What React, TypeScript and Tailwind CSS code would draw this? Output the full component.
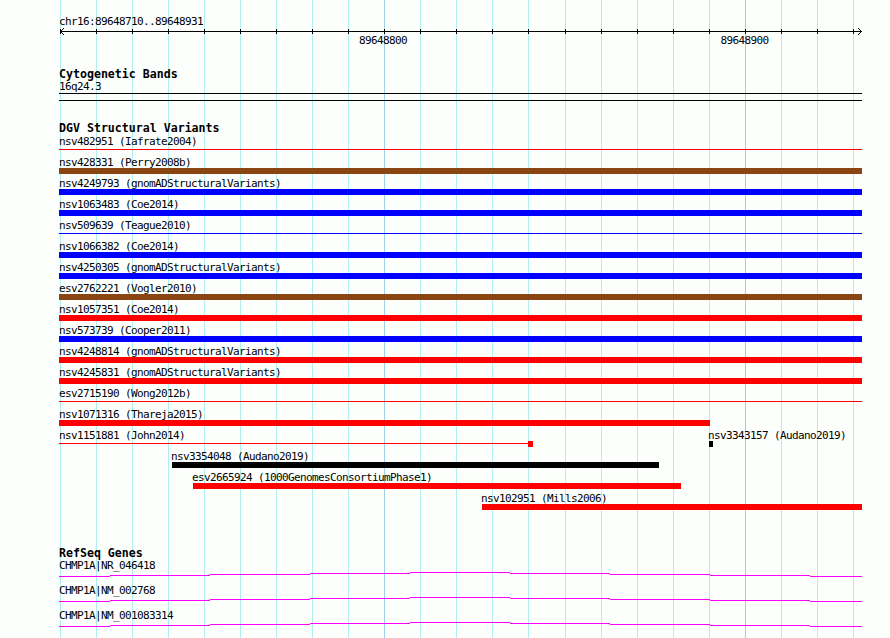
import React from "react";

type Row = {
  label: string;
  kind: "thick" | "thin";
  color: string;
};

const RED = "bg-[#ff0000]";
const BLUE = "bg-[#0000ff]";
const BROWN = "bg-[#8b4513]";

const fullRows: Row[] = [
  { label: "nsv482951 (Iafrate2004)", kind: "thin", color: RED },
  { label: "nsv428331 (Perry2008b)", kind: "thick", color: BROWN },
  { label: "nsv4249793 (gnomADStructuralVariants)", kind: "thick", color: BLUE },
  { label: "nsv1063483 (Coe2014)", kind: "thick", color: BLUE },
  { label: "nsv509639 (Teague2010)", kind: "thin", color: BLUE },
  { label: "nsv1066382 (Coe2014)", kind: "thick", color: BLUE },
  { label: "nsv4250305 (gnomADStructuralVariants)", kind: "thick", color: BLUE },
  { label: "esv2762221 (Vogler2010)", kind: "thick", color: BROWN },
  { label: "nsv1057351 (Coe2014)", kind: "thick", color: RED },
  { label: "nsv573739 (Cooper2011)", kind: "thick", color: BLUE },
  { label: "nsv4248814 (gnomADStructuralVariants)", kind: "thick", color: RED },
  { label: "nsv4245831 (gnomADStructuralVariants)", kind: "thick", color: RED },
  { label: "esv2715190 (Wong2012b)", kind: "thin", color: RED },
];

const GRID = [60, 96, 132, 168, 204, 240, 276, 312, 348, 384, 420, 456, 492, 528, 565, 601, 637, 673, 709, 745, 781, 817, 853];
const MAJOR = [384, 745];

const GENE_STEPS: [number, number, number][] = [
  [59, 110, 5],
  [110, 210, 4],
  [210, 310, 3],
  [310, 410, 2],
  [410, 510, 1],
  [510, 610, 2],
  [610, 710, 3],
  [710, 810, 4],
  [810, 862, 5],
];

function Label({ children, className = "" }: { children: React.ReactNode; className?: string }) {
  return <div className={`h-[11px] leading-[11px] whitespace-pre ${className}`}>{children}</div>;
}

function Heading({ children }: { children: React.ReactNode }) {
  return (
    <div className="h-[12px] leading-[12px] text-[11.6px] tracking-normal font-bold whitespace-pre">{children}</div>
  );
}

function FullRow({ row }: { row: Row }) {
  return (
    <div className="h-[21px]">
      <Label>{row.label}</Label>
      {row.kind === "thick" ? (
        <div className={`h-[6px] w-[803px] ${row.color}`} />
      ) : (
        <div className="h-[6px] w-[803px] pt-[2px]">
          <div className={`h-px w-full ${row.color}`} />
        </div>
      )}
    </div>
  );
}

function Axis() {
  const px: [number, number][] = [
    [61, 30], [62, 29], [63, 28], [61, 32], [62, 33], [63, 34],
    [860, 30], [859, 29], [858, 28], [860, 32], [859, 33], [858, 34],
  ];
  return (
    <svg width={803} height={20} className="block" shapeRendering="crispEdges">
      <rect x={1} y={4} width={802} height={1} fill="#000" />
      {GRID.map((g) => (
        <rect key={g} x={g - 59} y={2} width={1} height={5} fill="#000" />
      ))}
      {px.map(([x, y], i) => (
        <rect key={i} x={x - 59} y={y - 27} width={1} height={1} fill="#000" />
      ))}
      <text
        x={300}
        y={17}
        fontFamily="'DejaVu Sans Mono', monospace"
        fontSize={11}
        letterSpacing={-0.62}
        fill="#000"
      >
        89648800
      </text>
      <text
        x={661.5}
        y={17}
        fontFamily="'DejaVu Sans Mono', monospace"
        fontSize={11}
        letterSpacing={-0.62}
        fill="#000"
      >
        89648900
      </text>
    </svg>
  );
}

function GeneLine() {
  return (
    <svg width={803} height={6} className="block" shapeRendering="crispEdges">
      {GENE_STEPS.map(([a, b, y]) => (
        <rect key={a} x={a - 59} y={y} width={b - a} height={1} fill="#ff00ff" />
      ))}
    </svg>
  );
}

export default function App() {
  return (
    <div className="relative w-[890px] h-[638px] overflow-hidden bg-[#fdfffd] text-black text-[11px] tracking-[-0.62px] font-['DejaVu_Sans_Mono',monospace]">
      <svg className="absolute left-0 top-0" width={890} height={638} shapeRendering="crispEdges">
        {GRID.map((g) => (
          <rect
            key={g}
            x={g}
            y={0}
            width={1}
            height={638}
            fill={MAJOR.includes(g) ? "#9fd0e8" : "#b0eef0"}
          />
        ))}
      </svg>

      <div className="relative pl-[59px] pt-[16px]">
        <Label>chr16:89648710..89648931</Label>
        <Axis />

        <div className="mt-[21px]">
          <Heading>Cytogenetic Bands</Heading>
        </div>
        <div className="mt-px">
          <Label>16q24.3</Label>
        </div>
        <div className="mt-px h-[8px] w-[803px] border-y border-black" />

        <div className="mt-[21px]">
          <Heading>DGV Structural Variants</Heading>
        </div>

        <div className="mt-[2px] flex flex-col">
          {fullRows.map((r) => (
            <FullRow key={r.label} row={r} />
          ))}

          <div className="h-[21px]">
            <Label>nsv1071316 (Thareja2015)</Label>
            <div className={`h-[6px] w-[651px] ${RED}`} />
          </div>

          <div className="h-[21px]">
            <div className="flex h-[11px] leading-[11px] whitespace-pre">
              <span className="w-[649px]">nsv1151881 (John2014)</span>
              <span>nsv3343157 (Audano2019)</span>
            </div>
            <div className="flex h-[6px] items-start">
              <div className="w-[469px] pt-[2px]">
                <div className={`h-px w-full ${RED}`} />
              </div>
              <div className={`h-[6px] w-[5px] ${RED}`} />
              <div className="w-[176px]" />
              <div className="h-[6px] w-[4px] bg-black" />
            </div>
          </div>

          <div className="h-[21px]">
            <Label className="pl-[112px]">nsv3354048 (Audano2019)</Label>
            <div className="ml-[113px] h-[6px] w-[487px] bg-black" />
          </div>

          <div className="h-[21px]">
            <Label className="pl-[133px]">esv2665924 (1000GenomesConsortiumPhase1)</Label>
            <div className={`ml-[134px] h-[6px] w-[488px] ${RED}`} />
          </div>

          <div className="h-[21px]">
            <Label className="pl-[422px]">nsv102951 (Mills2006)</Label>
            <div className={`ml-[423px] h-[6px] w-[380px] ${RED}`} />
          </div>
        </div>

        <div className="mt-[33px]">
          <Heading>RefSeq Genes</Heading>
        </div>

        <div className="mt-px flex flex-col gap-[8px]">
          {["CHMP1A|NR_046418", "CHMP1A|NM_002768", "CHMP1A|NM_001083314"].map((g) => (
            <div key={g}>
              <Label>{g}</Label>
              <GeneLine />
            </div>
          ))}
        </div>
      </div>
    </div>
  );
}
